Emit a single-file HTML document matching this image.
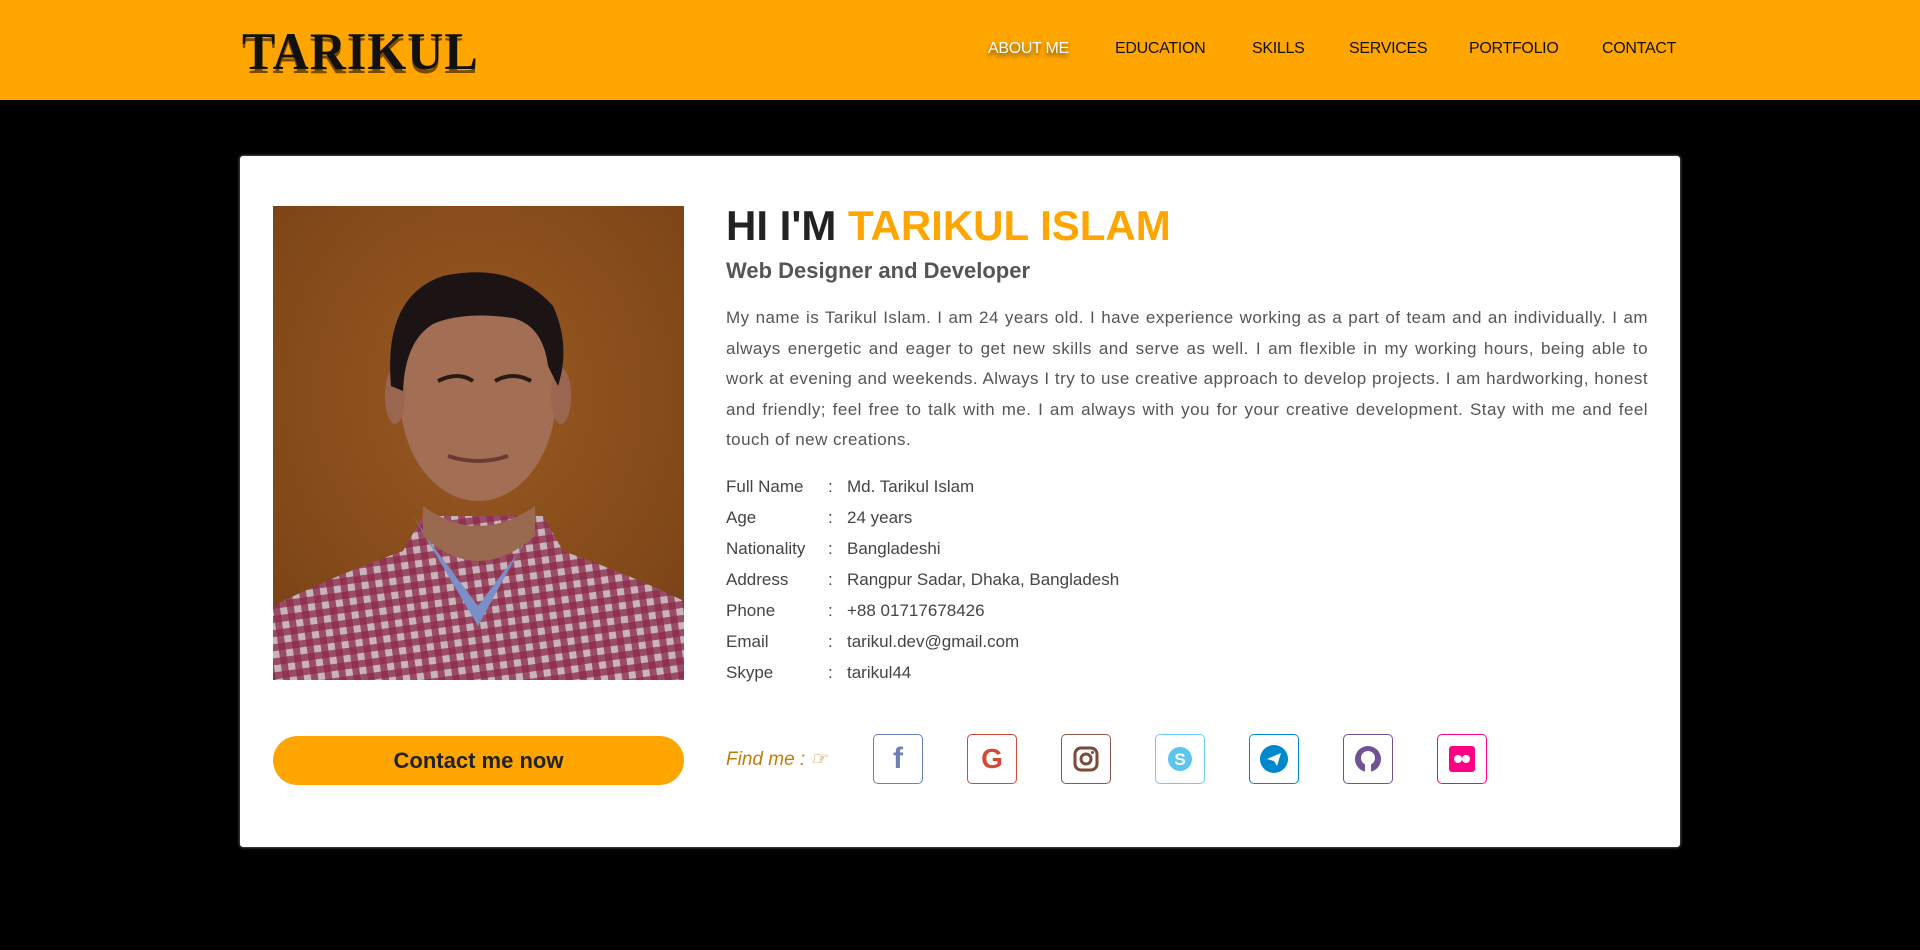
<!DOCTYPE html>
<html><head><meta charset="utf-8"><style>
*{margin:0;padding:0;box-sizing:border-box}
body{width:1920px;height:950px;background:#000;font-family:"Liberation Sans",sans-serif;overflow:hidden;position:relative}
.hdr{position:absolute;left:0;top:0;width:1920px;height:100px;background:#ffa500}
.logo{position:absolute;left:242px;top:22px;font-family:"Liberation Serif",serif;font-weight:bold;font-size:50px;letter-spacing:1px;color:#111;text-shadow:0 4px 0 #7a4a00;transform:scaleY(1.05)}
.nav{position:absolute;top:40px;font-size:16px;color:#111;letter-spacing:-0.3px}
.card{position:absolute;left:240px;top:156px;width:1440px;height:691px;background:#fff;border-radius:3px;box-shadow:0 0 3px #888}
.photo{position:absolute;left:273px;top:206px;width:411px;height:474px}
h1{position:absolute;left:726px;top:202px;font-size:42px;font-weight:bold;color:#222;white-space:nowrap}
h1 span{color:#ffa500}
h2{position:absolute;left:726px;top:258px;font-size:22px;font-weight:bold;color:#555}
.p{position:absolute;left:726px;top:303px;width:922px;font-size:17px;letter-spacing:0.45px;line-height:30.5px;color:#555;text-align:justify}
.info{position:absolute;left:726px;font-size:17px;color:#444;white-space:nowrap}
.info b{font-weight:normal;position:absolute;left:0}
.info i{font-style:normal;position:absolute;left:102px}
.info u{text-decoration:none;position:absolute;left:121px;white-space:nowrap}
.btn{position:absolute;left:273px;top:736px;width:411px;height:49px;border-radius:25px;background:#ffa500;font-size:22px;font-weight:bold;color:#222;text-align:center;line-height:49px}
.find{position:absolute;left:726px;top:748px;font-size:19px;font-style:italic;color:#c27c0e}
.ic{position:absolute;top:734px;width:50px;height:50px;border:1.5px solid;border-radius:5px;display:flex;align-items:center;justify-content:center}
</style></head><body>
<div class="hdr">
<div class="logo">TARIKUL</div>
<div class="nav" style="left:988px;color:#fff;text-shadow:0 3px 4px #6a4a00">ABOUT ME</div>
<div class="nav" style="left:1115px">EDUCATION</div>
<div class="nav" style="left:1252px">SKILLS</div>
<div class="nav" style="left:1349px">SERVICES</div>
<div class="nav" style="left:1469px">PORTFOLIO</div>
<div class="nav" style="left:1602px">CONTACT</div>
</div>
<div class="card"></div>
<svg class="photo" viewBox="0 0 411 474">
<defs>
<radialGradient id="bg" cx="50%" cy="40%" r="70%"><stop offset="0" stop-color="#9a5a22"/><stop offset="1" stop-color="#7a4316"/></radialGradient>
<pattern id="chk" width="14" height="14" patternUnits="userSpaceOnUse" patternTransform="rotate(-8)">
<rect width="14" height="14" fill="#c9b4bc"/><rect width="7" height="14" fill="#8a2848" opacity=".75"/><rect width="14" height="7" fill="#8a2848" opacity=".75"/></pattern>
</defs>
<rect width="411" height="474" fill="url(#bg)"/>
<path d="M0 400 Q60 370 130 345 L150 310 L270 310 L290 345 Q360 370 411 395 L411 474 L0 474Z" fill="url(#chk)"/>
<path d="M140 310 L205 420 L265 310 L250 340 L205 400 L160 340Z" fill="#7a8ec8"/>
<path d="M150 300 Q205 340 262 300 L262 330 Q205 380 150 330Z" fill="#9a6a50"/>
<ellipse cx="205" cy="190" rx="78" ry="105" fill="#a26e54"/>
<ellipse cx="122" cy="190" rx="10" ry="28" fill="#9a6650"/>
<ellipse cx="288" cy="190" rx="10" ry="28" fill="#9a6650"/>
<path d="M118 180 Q110 90 170 70 Q240 55 280 100 Q298 140 285 180 L275 160 Q270 120 240 112 Q190 105 160 118 Q132 135 130 185Z" fill="#1c1414"/>
<path d="M165 175 Q185 165 200 175 M222 175 Q240 165 258 175" stroke="#2a1a14" stroke-width="4" fill="none"/>
<path d="M175 250 Q205 260 235 250" stroke="#6a3a34" stroke-width="4" fill="none"/>
</svg>
<h1>HI I'M <span>TARIKUL ISLAM</span></h1>
<h2>Web Designer and Developer</h2>
<div class="p">My name is Tarikul Islam. I am 24 years old. I have experience working as a part of team and an individually. I am always energetic and eager to get new skills and serve as well. I am flexible in my working hours, being able to work at evening and weekends. Always I try to use creative approach to develop projects. I am hardworking, honest and friendly; feel free to talk with me. I am always with you for your creative development. Stay with me and feel touch of new creations.</div>
<div class="info" style="top:477px"><b>Full Name</b><i>:</i><u>Md. Tarikul Islam</u></div>
<div class="info" style="top:508px"><b>Age</b><i>:</i><u>24 years</u></div>
<div class="info" style="top:539px"><b>Nationality</b><i>:</i><u>Bangladeshi</u></div>
<div class="info" style="top:570px"><b>Address</b><i>:</i><u>Rangpur Sadar, Dhaka, Bangladesh</u></div>
<div class="info" style="top:601px"><b>Phone</b><i>:</i><u>+88 01717678426</u></div>
<div class="info" style="top:632px"><b>Email</b><i>:</i><u>tarikul.dev@gmail.com</u></div>
<div class="info" style="top:663px"><b>Skype</b><i>:</i><u>tarikul44</u></div>
<div class="btn">Contact me now</div>
<div class="find">Find me : &#9758;</div>
<div class="ic" style="left:873px;border-color:#6b80b8"><span style="font:bold 30px 'Liberation Sans';color:#6b80b8">f</span></div>
<div class="ic" style="left:967px;border-color:#d34836"><span style="font:bold 28px 'Liberation Sans';color:#d34836">G</span></div>
<div class="ic" style="left:1061px;border-color:#8a5a4a"><svg width="26" height="26" viewBox="0 0 26 26"><rect x="2" y="2" width="22" height="22" rx="6" fill="none" stroke="#7a4a3a" stroke-width="3"/><circle cx="13" cy="13" r="5" fill="none" stroke="#7a4a3a" stroke-width="3"/><circle cx="19.5" cy="6.5" r="1.5" fill="#7a4a3a"/></svg></div>
<div class="ic" style="left:1155px;border-color:#6fcbf0"><svg width="28" height="28" viewBox="0 0 28 28"><circle cx="14" cy="14" r="12" fill="#5cc4ef"/><text x="14" y="20" font-family="Liberation Sans" font-weight="bold" font-size="17" fill="#fff" text-anchor="middle">S</text></svg></div>
<div class="ic" style="left:1249px;border-color:#0088cc"><svg width="30" height="30" viewBox="0 0 30 30"><circle cx="15" cy="15" r="14" fill="#0088cc"/><path d="M8 15 L22 9 L18 22 L15 17Z" fill="#fff"/></svg></div>
<div class="ic" style="left:1343px;border-color:#6e5494"><svg width="28" height="28" viewBox="0 0 28 28"><circle cx="14" cy="14" r="13" fill="#6e5494"/><circle cx="14" cy="13" r="7" fill="#fff"/><rect x="11" y="18" width="6" height="9" fill="#fff"/></svg></div>
<div class="ic" style="left:1437px;border-color:#ff0084"><svg width="28" height="28" viewBox="0 0 28 28"><rect x="1" y="1" width="26" height="26" rx="3" fill="#ff0084"/><circle cx="10" cy="14" r="4" fill="#fff"/><circle cx="18" cy="14" r="4" fill="#fff"/></svg></div>
</body></html>
